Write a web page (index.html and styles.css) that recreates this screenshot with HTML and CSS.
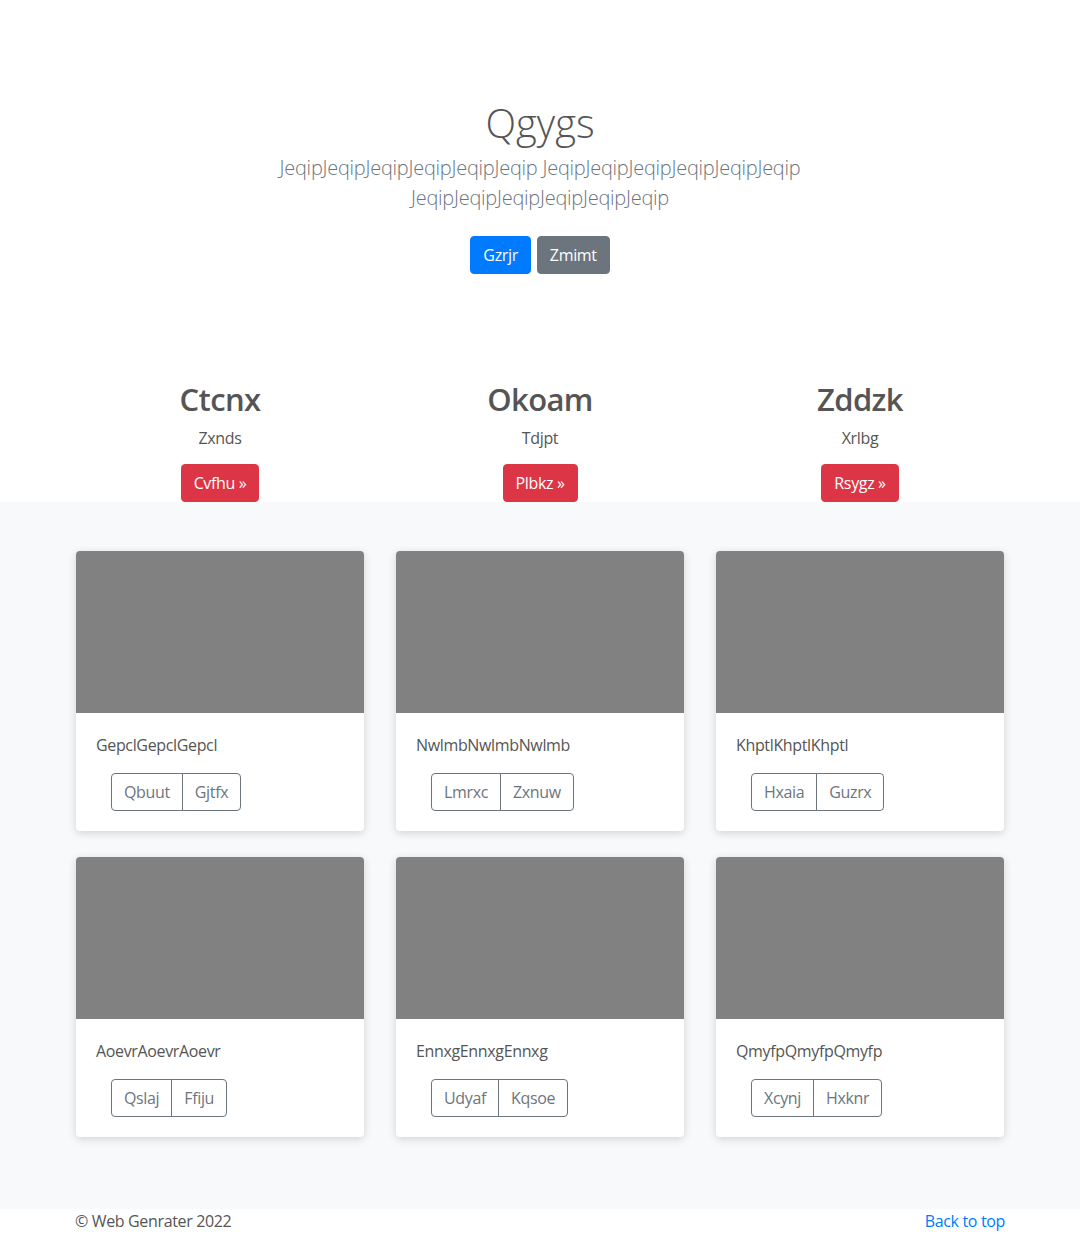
FILE: index.html
```html
<!DOCTYPE html>
<html lang="en">
<head>
<meta charset="utf-8">
<title>Qgygs</title>
<link rel="stylesheet" href="styles.css">
</head>
<body>
<section class="hero">
  <h1 class="hero-title">Qgygs</h1>
  <p class="lead">JeqipJeqipJeqipJeqipJeqipJeqip JeqipJeqipJeqipJeqipJeqipJeqip JeqipJeqipJeqipJeqipJeqipJeqip</p>
  <div class="hero-actions">
    <a class="btn btn-primary" href="#">Gzrjr</a>
    <a class="btn btn-secondary" href="#">Zmimt</a>
  </div>
</section>

<section class="features container">
  <div class="feature">
    <h2>Ctcnx</h2>
    <p>Zxnds</p>
    <a class="btn btn-danger" href="#">Cvfhu »</a>
  </div>
  <div class="feature">
    <h2>Okoam</h2>
    <p>Tdjpt</p>
    <a class="btn btn-danger" href="#">Plbkz »</a>
  </div>
  <div class="feature">
    <h2>Zddzk</h2>
    <p>Xrlbg</p>
    <a class="btn btn-danger" href="#">Rsygz »</a>
  </div>
</section>

<section class="album">
  <div class="container grid">
    <div class="card"><div class="card-img"></div><div class="card-body"><p>GepclGepclGepcl</p><div class="btn-group"><a class="btn btn-outline" href="#">Qbuut</a><a class="btn btn-outline" href="#">Gjtfx</a></div></div></div>
    <div class="card"><div class="card-img"></div><div class="card-body"><p>NwlmbNwlmbNwlmb</p><div class="btn-group"><a class="btn btn-outline" href="#">Lmrxc</a><a class="btn btn-outline" href="#">Zxnuw</a></div></div></div>
    <div class="card"><div class="card-img"></div><div class="card-body"><p>KhptlKhptlKhptl</p><div class="btn-group"><a class="btn btn-outline" href="#">Hxaia</a><a class="btn btn-outline" href="#">Guzrx</a></div></div></div>
    <div class="card"><div class="card-img"></div><div class="card-body"><p>AoevrAoevrAoevr</p><div class="btn-group"><a class="btn btn-outline" href="#">Qslaj</a><a class="btn btn-outline" href="#">Ffiju</a></div></div></div>
    <div class="card"><div class="card-img"></div><div class="card-body"><p>EnnxgEnnxgEnnxg</p><div class="btn-group"><a class="btn btn-outline" href="#">Udyaf</a><a class="btn btn-outline" href="#">Kqsoe</a></div></div></div>
    <div class="card"><div class="card-img"></div><div class="card-body"><p>QmyfpQmyfpQmyfp</p><div class="btn-group"><a class="btn btn-outline" href="#">Xcynj</a><a class="btn btn-outline" href="#">Hxknr</a></div></div></div>
  </div>
</section>

<footer class="footer container">
  <span>© Web Genrater 2022</span>
  <a href="#" class="back">Back to top</a>
</footer>
</body>
</html>
```
FILE: styles.css
```css
* { box-sizing: border-box; }
html, body { margin: 0; padding: 0; }
body {
  font-family: "Open Sans", "Noto Sans", "Liberation Sans", sans-serif;
  font-size: 16px;
  line-height: 24px;
  letter-spacing: -0.35px;
  color: #555;
  background: #fff;
}
a { text-decoration: none; }
.container { width: 930px; margin: 0 auto; }

.hero {
  text-align: center;
  padding-top: 99px;
  padding-bottom: 106px;
}
.hero-title {
  margin: 0 0 6px;
  font-size: 40px;
  font-weight: 300;
  line-height: 48px;
  letter-spacing: 0;
  color: #555;
}
.lead {
  max-width: 640px;
  margin: 0 auto 23px;
  font-size: 20px;
  font-weight: 300;
  line-height: 30px;
  letter-spacing: -0.25px;
  color: #6c757d;
}
.hero-actions { display: flex; justify-content: center; gap: 6px; }

.btn {
  display: inline-block;
  height: 38px;
  padding: 6px 12px;
  font-size: 16px;
  line-height: 24px;
  border: 1px solid transparent;
  border-radius: 4px;
  color: #fff;
}
.btn-primary { background: #007bff; border-color: #007bff; }
.btn-secondary { background: #6c757d; border-color: #6c757d; }
.btn-danger { background: #dc3545; border-color: #dc3545; }

.features {
  display: grid;
  grid-template-columns: repeat(3, 1fr);
  gap: 30px;
  text-align: center;
}
.feature h2 {
  margin: 0 0 8px;
  font-size: 31px;
  font-weight: 600;
  line-height: 38px;
  letter-spacing: -0.6px;
  color: #555;
}
.feature p { margin: 0 0 14px; }

.album {
  background: #f8f9fa;
  padding: 49px 0 72px;
}
.grid {
  display: grid;
  grid-template-columns: repeat(3, 1fr);
  column-gap: 32px;
  row-gap: 26px;
  width: 928px;
}
.card {
  background: #fff;
  border-radius: 4px;
  overflow: hidden;
  box-shadow: 0 2px 8px rgba(0, 0, 0, 0.16);
}
.card-img { height: 162px; background: #818181; }
.card-body { padding: 20px; }
.card-body p { margin: 0 0 16px; }
.btn-group { display: inline-flex; margin-left: 15px; }
.btn-outline {
  color: #6c757d;
  border-color: #6c757d;
  background: transparent;
}
.btn-group .btn-outline:first-child { border-radius: 4px 0 0 4px; }
.btn-group .btn-outline + .btn-outline { margin-left: -1px; border-radius: 0 4px 4px 0; }

.footer {
  display: flex;
  justify-content: space-between;
  height: 24px;
  line-height: 24px;
}
.back { color: #007bff; }
```
